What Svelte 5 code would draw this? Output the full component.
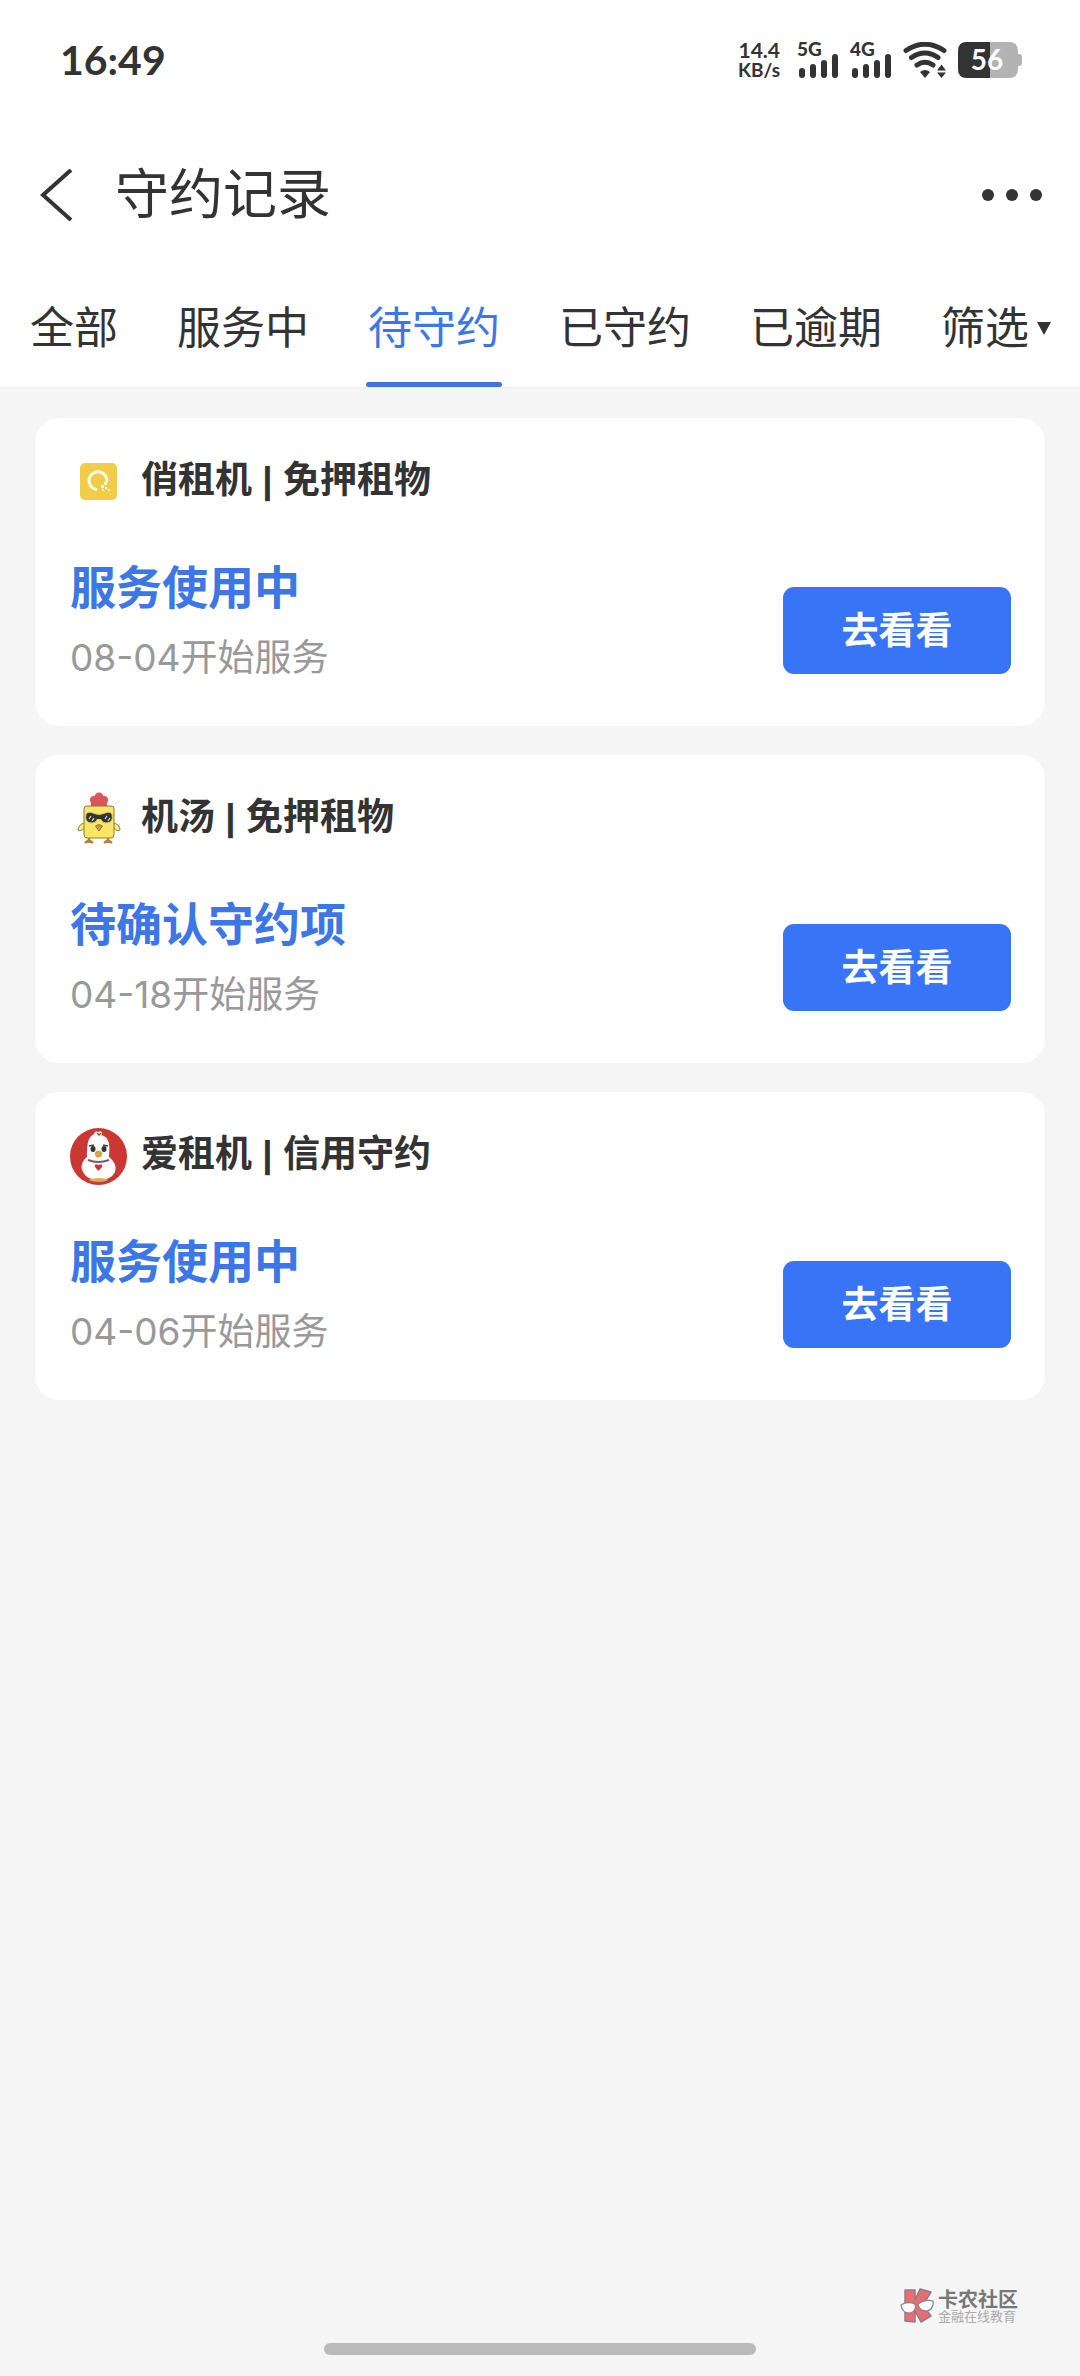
<script>
  const tabs = ['全部', '服务中', '待守约', '已守约', '已逾期'];
  let active = $state('待守约');

  const records = [
    { icon: 'ring', name: '俏租机 | 免押租物', status: '服务使用中', date: '08-04', note: '开始服务' },
    { icon: 'chick', name: '机汤 | 免押租物', status: '待确认守约项', date: '04-18', note: '开始服务' },
    { icon: 'goose', name: '爱租机 | 信用守约', status: '服务使用中', date: '04-06', note: '开始服务' }
  ];
</script>

{#snippet signal(label)}
  <svg class="signal" viewBox="0 0 42 36" aria-label={label}>
    <text x="0" y="14">{label}</text>
    <rect x="2" y="26" width="6" height="10" rx="3" />
    <rect x="13" y="22" width="6" height="14" rx="3" />
    <rect x="24" y="18" width="6" height="18" rx="3" />
    <rect x="35" y="12" width="6" height="24" rx="3" />
  </svg>
{/snippet}

<div class="screen">
  <header>
    <div class="statusbar">
      <time>16:49</time>
      <div class="indicators">
        <div class="speed"><span>14.4</span><span class="unit">KB/s</span></div>
        {@render signal('5G')}
        {@render signal('4G')}
        <svg class="wifi" viewBox="0 0 44 36" aria-label="Wi-Fi">
          <g fill="none" stroke="#333" stroke-width="5" stroke-linecap="round">
            <path d="M3 8.500Q22-4 41 8.500" />
            <path d="M8.500 15.500Q22 6.500 35 15.500" />
            <path d="M14 23Q22 17.500 30 23" />
          </g>
          <path d="M17 30Q22 26 27 30L22 36Z" />
          <path d="M34 28.500L38.500 22.500L43 28.500ZM34 30.500L38.500 36L43 30.500Z" />
        </svg>
        <svg class="battery" viewBox="0 0 64 36" aria-label="56%">
          <path d="M9 0H51Q60 0 60 9V12H61Q64 12 64 15V21Q64 24 61 24H60V27Q60 36 51 36H9Q0 36 0 27V9Q0 0 9 0Z" fill="#b3b3b3" />
          <path d="M32 0H9Q0 0 0 9V27Q0 36 9 36H32Z" />
          <text x="29" y="28" text-anchor="middle">56</text>
        </svg>
      </div>
    </div>

    <div class="titlebar">
      <button class="back" aria-label="返回">
        <svg viewBox="0 0 34 52"><path d="M31 1L3 26L31 51" fill="none" stroke="#333" stroke-width="4" /></svg>
      </button>
      <h1>守约记录</h1>
      <button class="more" aria-label="更多">
        <svg viewBox="0 0 62 14"><circle cx="7" cy="7" r="6" /><circle cx="31" cy="7" r="6" /><circle cx="55" cy="7" r="6" /></svg>
      </button>
    </div>

    <nav>
      {#each tabs as tab}
        <button class="tab" class:active={tab === active} onclick={() => (active = tab)}>{tab}</button>
      {/each}
      <button class="tab filter">筛选
        <svg viewBox="0 0 14 13"><path d="M0 0H14L7 13Z" /></svg>
      </button>
    </nav>
  </header>

  <main>
    {#each records as r}
      <article>
        <div class="merchant">
          {#if r.icon === 'ring'}
            <svg viewBox="0 0 57 57">
              <rect x="10" y="9" width="37" height="37" rx="5" fill="#f1cc48" />
              <path d="M26 35.500A9 9 0 1 1 37 27" fill="none" stroke="#fffbe9" stroke-width="3" stroke-linecap="round" />
              <g fill="#fffbe9">
                <rect x="31" y="31" width="3" height="3" /><rect x="34" y="28" width="3" height="3" />
                <rect x="35" y="33" width="2" height="2" /><rect x="32" y="35" width="2" height="2" /><rect x="38" y="35" width="2" height="2" />
              </g>
            </svg>
          {:else if r.icon === 'chick'}
            <svg viewBox="0 0 57 57">
              <g fill="#dc555c">
                <circle cx="24" cy="9" r="4" /><circle cx="29" cy="6" r="4.500" /><circle cx="34" cy="9" r="4" />
                <rect x="21" y="9" width="16" height="8" rx="2" />
              </g>
              <g stroke="#8b7c35" stroke-width="1">
                <path d="M14 32Q8 34 8 39Q10 41 15 37M44 32Q50 34 50 39Q48 41 43 37" fill="#f8e978" />
                <rect x="14" y="15" width="30" height="32" rx="3" fill="#fae565" />
                <path d="M25.500 35Q29 32 32.500 35L29 40Z" fill="#d69b31" />
                <path d="M19 47V52M15 52L19 49L23 52M38 47V52M34 52L38 49L42 52" fill="none" stroke="#b87f39" stroke-width="2.500" />
              </g>
              <path d="M16 23Q18 20 23 22Q29 25 35 22Q40 20 42 23Q44 32 36 32Q32 32 31 28.500H27Q26 32 22 32Q14 32 16 23Z" fill="#37362b" stroke="#d8c881" stroke-width="1" />
              <path d="M19 28L21 25M22 30L24 27M35 28L37 25M38 30L40 27" stroke="#dbe1df" stroke-width="1.200" />
            </svg>
          {:else}
            <svg viewBox="0 0 57 57">
              <circle cx="28.500" cy="28.500" r="28.500" fill="#cb3732" />
              <path d="M28 5C17 6 17 18 17 29C12 33 10 39 13 44Q17 52 29 52Q41 52 45 44C47 38 44 33 39 29C40 18 40 8 30 7Z" fill="#fff" />
              <path d="M24 8Q24 2 28 4Q32 2 32 6Q31 9 28 10Z" fill="#fff" />
              <path d="M27 5L29 7L31 5" fill="none" stroke="#cb3732" stroke-width="1.500" />
              <path d="M18 52Q29 48 39 52Q29 56 18 52Z" fill="#ddaa55" />
              <path d="M19 18L24 17M33 17L38 18" stroke="#51413c" stroke-width="1.500" />
              <ellipse cx="23" cy="21" rx="2.500" ry="3" fill="#333" /><ellipse cx="34" cy="21" rx="2.500" ry="3" fill="#333" />
              <circle cx="28.500" cy="26" r="3.500" fill="#dda33d" />
              <path d="M18 32Q28 36 39 32" fill="none" stroke="#855064" stroke-width="2" />
              <path d="M28.500 43L25 39Q24 35 28.500 37Q33 35 32 39Z" fill="#cb3732" />
            </svg>
          {/if}
          <h2>{r.name}</h2>
        </div>
        <div class="body">
          <div>
            <p class="status">{r.status}</p>
            <p class="date">{r.date}{r.note}</p>
          </div>
          <button class="go">去看看</button>
        </div>
      </article>
    {/each}
  </main>

  <footer>
    <div class="brand">
      <svg viewBox="0 0 34 36">
        <g fill="#ec6b74" stroke="#8a8083" stroke-width="1.500" stroke-linejoin="round">
          <path d="M5 2H15V12L20 1L31 4L23 17L31 28L21 34L15 23V34L5 33Z" />
        </g>
        <g fill="#fff" stroke="#858585" stroke-width="1.200">
          <path d="M1 17Q7 13 15 16Q17 23 10 25Q2 25 1 17Z" /><path d="M18 16Q25 11 33 13Q34 21 27 23Q19 23 18 16Z" />
        </g>
      </svg>
      <div class="words"><strong>卡农社区</strong><small>金融在线教育</small></div>
    </div>
    <div class="home"></div>
  </footer>
</div>

<style>
  :global(body) { margin: 0; background: #f5f5f5; }
  .screen {
    min-height: 100vh;
    display: flex;
    flex-direction: column;
    background: #f5f5f5;
    color: #333;
    font-family: Inter, 'Noto Sans CJK SC', sans-serif;
  }
  button {
    margin: 0;
    padding: 0;
    border: 0;
    background: none;
    color: inherit;
    font: inherit;
    cursor: pointer;
  }
  svg { display: block; flex: none; fill: #333; }
  h1, h2, p { margin: 0; }
  header { background: #fff; border-bottom: 1px solid #eee; }

  .statusbar {
    height: 120px;
    box-sizing: border-box;
    padding: 0 58px 0 60px;
    display: flex;
    align-items: center;
    justify-content: space-between;
    font-family: Lato, sans-serif;
    font-weight: 700;
  }
  time { font-size: 41px; line-height: 50px; }
  .indicators { display: flex; align-items: center; gap: 11px; }
  .speed {
    display: flex;
    flex-direction: column;
    align-items: flex-end;
    margin-right: 6px;
    font-size: 21px;
    line-height: 20px;
  }
  .unit { font-size: 19px; }
  .signal { width: 42px; height: 36px; overflow: visible; font-size: 19px; font-weight: 900; }
  .wifi { width: 44px; height: 36px; }
  .battery { width: 64px; height: 36px; font-size: 28px; }
  .battery text { fill: #fff; }

  .titlebar {
    height: 150px;
    padding: 0 37px 0 40px;
    display: flex;
    align-items: center;
  }
  .back svg { width: 34px; height: 52px; }
  h1 { flex: 1; margin-left: 41px; font-size: 54px; line-height: 80px; font-weight: 400; }
  .more svg { width: 62px; height: 14px; }

  nav {
    display: flex;
    justify-content: space-between;
    padding: 0 27px 0 28px;
  }
  .tab {
    position: relative;
    display: flex;
    align-items: center;
    padding: 26px 2px 27px;
    font-size: 44px;
    line-height: 64px;
    white-space: nowrap;
  }
  .tab.active { color: #3d76e6; }
  .tab.active::after {
    content: '';
    position: absolute;
    left: 0;
    right: 0;
    bottom: 0;
    height: 5px;
    border-radius: 3px;
    background: #3f74dc;
  }
  .filter { gap: 8px; }
  .filter svg { width: 14px; height: 13px; }

  main { display: flex; flex-direction: column; gap: 29px; padding: 30px 35px; }
  article { padding: 36px 34px 41px 35px; border-radius: 24px; background: #fff; }
  .merchant { display: flex; align-items: flex-start; gap: 14px; }
  .merchant svg { width: 57px; height: 57px; }
  h2 {
    font-family: 'Liberation Sans', 'Noto Sans CJK SC', sans-serif;
    font-size: 37px;
    line-height: 54px;
    font-weight: 700;
  }
  .body { display: flex; align-items: flex-end; justify-content: space-between; margin-top: 42px; }
  .status { font-size: 46px; line-height: 68px; font-weight: 700; color: #3d76e6; }
  .date { margin-top: 10px; font-size: 37px; line-height: 54px; color: #999; }
  .go {
    box-sizing: border-box;
    width: 228px;
    height: 87px;
    margin-bottom: 11px;
    padding-bottom: 5px;
    border-radius: 11px;
    background: #3875f6;
    color: #fff;
    font-size: 37px;
    font-weight: 700;
  }

  footer { margin-top: auto; padding-bottom: 21px; display: flex; flex-direction: column; align-items: center; }
  .brand { align-self: flex-end; display: flex; align-items: center; gap: 4px; margin-right: 62px; }
  .brand svg { width: 34px; height: 36px; }
  .words { display: flex; flex-direction: column; }
  strong { font-size: 20px; line-height: 20px; color: #777; }
  small { font-size: 13px; line-height: 12px; color: #aaa; }
  .home { width: 40%; height: 12px; margin-top: 19px; border-radius: 6px; background: #bababa; }
</style>
